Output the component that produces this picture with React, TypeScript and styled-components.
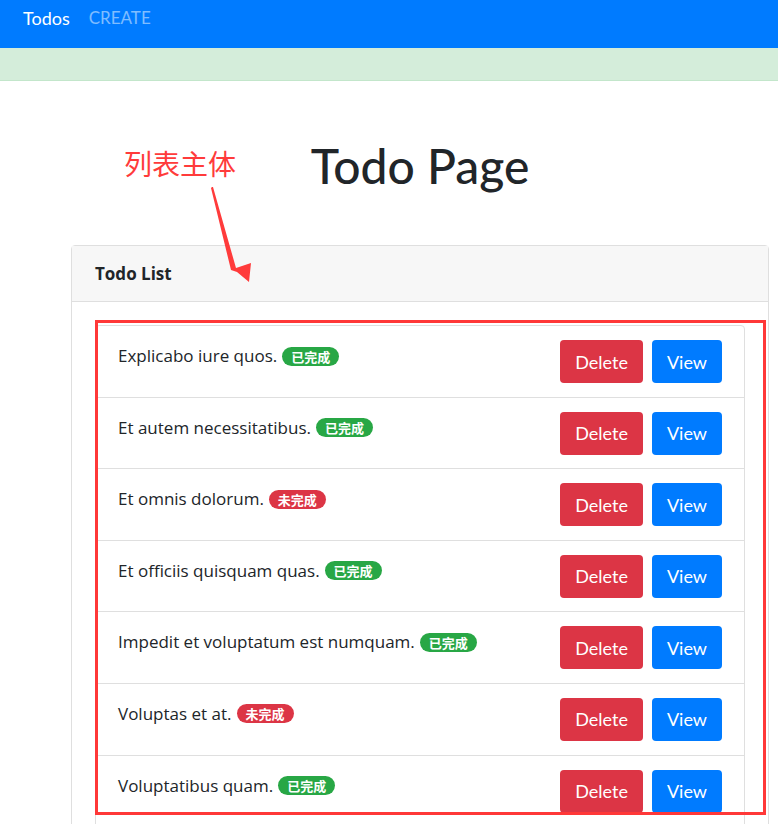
import React from 'react';
import styled, { createGlobalStyle } from 'styled-components';

const GlobalStyle = createGlobalStyle`
  body {
    margin: 0;
    font-family: Lato, "Noto Sans", "Noto Sans CJK SC", sans-serif;
    color: #212529;
    background: #fff;
  }
`;

const Page = styled.div`
  position: relative;
  width: 778px;
  height: 824px;
  overflow: hidden;
`;

const Navbar = styled.nav`
  height: 48px;
  box-sizing: border-box;
  background-color: #007bff;
  padding: 6px 23px 0;
  display: flex;
  align-items: flex-start;
  gap: 19px;
`;

const Brand = styled.a`
  color: #fff;
  font-size: 18px;
  line-height: 24px;
`;

const NavLink = styled.a`
  color: rgba(255, 255, 255, 0.5);
  font-size: 17px;
  line-height: 24px;
`;

const Alert = styled.div`
  height: 32px;
  background-color: #d4edda;
  border-bottom: 1px solid #c3e6cb;
`;

const Container = styled.main`
  margin-left: 71px;
  width: 698px;
`;

const Title = styled.h1`
  margin: 56px 0 51px;
  text-align: center;
  font-size: 48px;
  font-weight: 500;
  line-height: 57px;
`;

const Card = styled.section`
  border: 1px solid #dfdfdf;
  border-radius: 4px;
`;

const CardHeader = styled.header`
  background-color: #f7f7f7;
  border-bottom: 1px solid #dfdfdf;
  padding: 15px 23px;
  font-family: "Open Sans", sans-serif;
  font-size: 17px;
  font-weight: 700;
  line-height: 25px;
`;

const CardBody = styled.div`
  padding: 23px 23px 0;
`;

const ListGroup = styled.ul`
  list-style: none;
  margin: 0;
  padding: 0;
  border: 1px solid #dfdfdf;
  border-radius: 4px;
`;

const ListItem = styled.li`
  display: flex;
  justify-content: space-between;
  align-items: flex-start;
  padding: 14px 22px 13.6px;
  border-bottom: 1px solid #dfdfdf;
`;

const ItemText = styled.div`
  padding-top: 4px;
  font-family: "Open Sans", sans-serif;
  font-size: 17px;
  line-height: 24px;
  display: flex;
  align-items: center;
  gap: 5px;
`;

const Badge = styled.span<{ $done: boolean }>`
  display: inline-block;
  background-color: ${(p) => (p.$done ? '#28a745' : '#dc3545')};
  color: #fff;
  font-family: "Noto Sans CJK SC", sans-serif;
  font-size: 13px;
  font-weight: 700;
  line-height: 19px;
  padding: 0 9px;
  border-radius: 10px;
`;

const Actions = styled.div`
  display: flex;
  gap: 9px;
`;

const Button = styled.button<{ $variant: 'danger' | 'primary' }>`
  height: 43px;
  padding: 0 15px;
  border: none;
  border-radius: 4px;
  font-family: inherit;
  font-size: 18px;
  color: #fff;
  background-color: ${(p) => (p.$variant === 'danger' ? '#dc3545' : '#007bff')};
`;

const Note = styled.div`
  position: absolute;
  left: 124px;
  top: 143px;
  color: #ff3b3b;
  font-family: "Noto Sans CJK SC", sans-serif;
  font-size: 28px;
  line-height: 40px;
`;

const Arrow = styled.svg`
  position: absolute;
  left: 200px;
  top: 180px;
`;

const Frame = styled.div`
  position: absolute;
  left: 95px;
  top: 320px;
  width: 671px;
  height: 495px;
  box-sizing: border-box;
  border: 3px solid #ff3838;
`;

const todos = [
  { title: 'Explicabo iure quos.', done: true },
  { title: 'Et autem necessitatibus.', done: true },
  { title: 'Et omnis dolorum.', done: false },
  { title: 'Et officiis quisquam quas.', done: true },
  { title: 'Impedit et voluptatum est numquam.', done: true },
  { title: 'Voluptas et at.', done: false },
  { title: 'Voluptatibus quam.', done: true },
];

const App: React.FC = () => {
  return (
    <Page>
      <GlobalStyle />
      <Navbar>
        <Brand>Todos</Brand>
        <NavLink>CREATE</NavLink>
      </Navbar>
      <Alert />
      <Container>
        <Title>Todo Page</Title>
        <Card>
          <CardHeader>Todo List</CardHeader>
          <CardBody>
            <ListGroup>
              {todos.map((t) => (
                <ListItem key={t.title}>
                  <ItemText>
                    {t.title}
                    <Badge $done={t.done}>{t.done ? '已完成' : '未完成'}</Badge>
                  </ItemText>
                  <Actions>
                    <Button $variant="danger">Delete</Button>
                    <Button $variant="primary">View</Button>
                  </Actions>
                </ListItem>
              ))}
            </ListGroup>
          </CardBody>
        </Card>
      </Container>

      {/* annotation overlay */}
      <Note>列表主体</Note>
      <Arrow width="60" height="110" viewBox="0 0 60 110">
        <polygon points="12,7 13,7 36,88 51,83 49,102 37,92 31,90 11,8" fill="#ff3b3b" />
      </Arrow>
      <Frame />
    </Page>
  );
};

export default App;
